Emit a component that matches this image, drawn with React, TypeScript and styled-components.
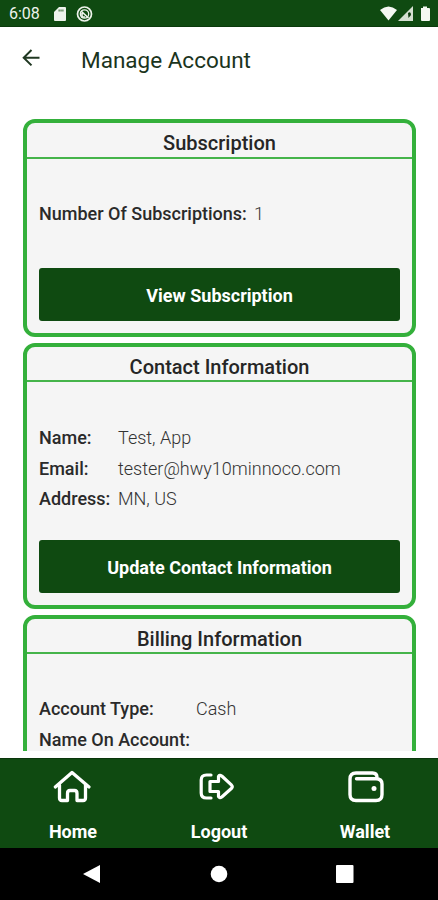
import React from "react";
import styled, { createGlobalStyle } from "styled-components";

const GREEN = "#0f4a11";
const BRIGHT = "#34b03b";

const GlobalStyle = createGlobalStyle`
  * { box-sizing: border-box; }
  body { margin: 0; background: #fff; font-family: Roboto, "Liberation Sans", sans-serif; }
`;

const Screen = styled.div`
  width: 438px;
  height: 900px;
  display: flex;
  flex-direction: column;
  overflow: hidden;
  background: #fff;
`;

const StatusBar = styled.div`
  flex: none;
  height: 27px;
  display: flex;
  align-items: center;
  justify-content: space-between;
  padding: 0 7px 0 9px;
  background: ${GREEN};
  border-bottom: 1px solid #0a3a0c;
  color: #eef3ec;
`;

const StatusGroup = styled.div`
  display: flex;
  align-items: center;
`;

const Clock = styled.span`
  width: 45px;
  font-size: 16px;
  line-height: 26px;
  padding-top: 2px;
  white-space: nowrap;
`;

const Header = styled.header`
  flex: none;
  height: 92px;
  display: flex;
  align-items: flex-start;
  padding: 20px 0 0 20px;
`;

const BackButton = styled.button`
  width: 61px;
  height: 24px;
  padding: 0;
  border: 0;
  background: none;
  text-align: left;
`;

const Title = styled.h1`
  margin: 0;
  font-size: 22.5px;
  font-weight: 400;
  line-height: 26px;
  color: #1b341d;
  white-space: nowrap;
`;

const Content = styled.main`
  flex: none;
  height: 632px;
  overflow: hidden;
  padding: 0 22px 0 23px;
  display: flex;
  flex-direction: column;
  gap: 6px;
`;

const Card = styled.section<{ $height: number }>`
  flex: none;
  height: ${(p) => p.$height}px;
  display: flex;
  flex-direction: column;
  border: 4px solid ${BRIGHT};
  border-radius: 12px;
  background: #f5f5f5;
`;

const CardTitle = styled.h2<{ $height: number }>`
  flex: none;
  height: ${(p) => p.$height}px;
  margin: 0;
  padding-top: 5px;
  border-bottom: 2px solid #45b44a;
  text-align: center;
  font-size: 20px;
  font-weight: 500;
  line-height: 31px;
  color: #262626;
`;

const Fields = styled.dl<{ $labelWidth: number; $top: number }>`
  display: grid;
  grid-template-columns: ${(p) => p.$labelWidth}px 1fr;
  grid-auto-rows: 30.6px;
  margin: ${(p) => p.$top}px 0 0;
  padding-left: 12px;
  font-size: 18px;
  line-height: 30px;
  white-space: nowrap;
`;

const Label = styled.dt`
  font-weight: 500;
  color: #2a2a2a;
`;

const Value = styled.dd`
  margin: 0;
  font-weight: 300;
  color: #333;
`;

const ActionButton = styled.button`
  flex: none;
  height: 53px;
  margin: auto 12px 12px;
  padding: 2px 0 0;
  border: 0;
  border-radius: 3px;
  background: ${GREEN};
  color: #fff;
  font-family: inherit;
  font-size: 18px;
  font-weight: 700;
`;

const TabBar = styled.nav`
  flex: none;
  height: 90px;
  margin-top: 7px;
  display: grid;
  grid-template-columns: repeat(3, 146px);
  background: ${GREEN};
  border-top: 1px solid #0a350b;
`;

const Tab = styled.a`
  display: flex;
  flex-direction: column;
  align-items: center;
  padding-top: 8px;
  color: #fff;
  font-size: 18px;
  font-weight: 700;
  line-height: 24px;
  svg { margin-bottom: 13px; }
`;

const SystemBar = styled.div`
  flex: 1;
  display: flex;
  justify-content: space-between;
  align-items: center;
  padding: 0 84px 0 83px;
  background: #000;
`;

function HomeIcon() {
  return (
    <svg width="42" height="40" viewBox="0 0 42 40" fill="none" stroke="#fff" strokeWidth="3.300" strokeLinejoin="round" strokeLinecap="round">
      <path d="M3.300 20 20 5.500 37 20M7.500 18V31Q7.500 33.500 10 33.500H15.500V26.500Q15.500 23.500 18 23.500H22.500Q25 23.500 25 26.500V33.500H31Q33.500 33.500 33.500 31V18" />
    </svg>
  );
}

function LogoutIcon() {
  return (
    <svg width="42" height="40" viewBox="0 0 42 40" fill="none" stroke="#fff" strokeWidth="3.200" strokeLinejoin="round" strokeLinecap="round">
      <path d="M13 8H8.500Q3.200 8 3.200 13V26Q3.200 31 8.500 31H13" />
      <path d="M12 14.500H20.500V9.500Q21.500 7.500 23.800 9L33.600 18.200Q34.900 19.700 33.600 21.200L23.800 30Q21.500 31.500 20.500 29.500V24.500H12Z" />
    </svg>
  );
}

function WalletIcon() {
  return (
    <svg width="42" height="40" viewBox="0 0 42 40" fill="none" stroke="#fff" strokeWidth="3.400" strokeLinejoin="round" strokeLinecap="round">
      <path d="M33 11V10.500Q33 6 28.500 6H12Q6 6 6 12V27.500Q6 33.500 12 33.500H32Q38 33.500 38 27.500V17Q38 11.700 32 11.700H12.500" />
      <circle cx="30" cy="21.400" r="2.500" fill="#fff" stroke="none" />
    </svg>
  );
}

export default function App() {
  return (
    <>
      <GlobalStyle />
      <Screen>
        <StatusBar>
          <StatusGroup>
            <Clock>6:08</Clock>
            <svg width="42" height="20" viewBox="0 0 42 20">
              <path d="M5 4H11Q12 4 12 5V17Q12 18 11 18H1Q0 18 0 17V9Z" fill="currentColor" />
              <path d="M4.500 7.500h5" stroke="#547d50" strokeWidth="2" strokeDasharray="1.300 .6" />
              <g fill="none" stroke="currentColor" strokeWidth="1.700">
                <circle cx="30.500" cy="11" r="7" />
                <circle cx="30.500" cy="11" r="4.200" strokeWidth="1.300" />
                <path d="m27 8 7.500 7M28 10v4h3" />
              </g>
            </svg>
          </StatusGroup>
          <svg width="52" height="20" viewBox="0 0 52 20" fill="#f4f8f2">
            <path d="M1 7Q9.500 0 18 7L9.500 17.500Z" />
            <path d="M19 18 34 3V18Z" fill="#d5e0d2" />
            <path d="M29 10Q32 8 32 12L29.500 15Z" fill="#0b380c" />
            <path d="M42 5h2V3.500h4V5h2q1 0 1 1V17q0 1-1 1h-7q-1 0-1-1V6q0-1 0-1Z" />
          </svg>
        </StatusBar>
        <Header>
          <BackButton aria-label="Back">
            <svg width="22" height="22" viewBox="0 0 22 22" fill="none" stroke="#203822" strokeWidth="2">
              <path d="M19.500 10.700H3.500M11.500 3 3.700 10.700 11.500 18.400" />
            </svg>
          </BackButton>
          <Title>Manage Account</Title>
        </Header>
        <Content>
          <Card $height={218}>
            <CardTitle $height={36}>Subscription</CardTitle>
            <Fields $labelWidth={215} $top={40}>
              <Label>Number Of Subscriptions:</Label>
              <Value>1</Value>
            </Fields>
            <ActionButton>View Subscription</ActionButton>
          </Card>
          <Card $height={266}>
            <CardTitle $height={35}>Contact Information</CardTitle>
            <Fields $labelWidth={79} $top={41}>
              <Label>Name:</Label>
              <Value>Test, App</Value>
              <Label>Email:</Label>
              <Value>tester@hwy10minnoco.com</Value>
              <Label>Address:</Label>
              <Value>MN, US</Value>
            </Fields>
            <ActionButton>Update Contact Information</ActionButton>
          </Card>
          <Card $height={265}>
            <CardTitle $height={35}>Billing Information</CardTitle>
            <Fields $labelWidth={157} $top={40}>
              <Label>Account Type:</Label>
              <Value>Cash</Value>
              <Label>Name On Account:</Label>
              <Value />
            </Fields>
          </Card>
        </Content>
        <TabBar>
          <Tab><HomeIcon />Home</Tab>
          <Tab><LogoutIcon />Logout</Tab>
          <Tab><WalletIcon />Wallet</Tab>
        </TabBar>
        <SystemBar>
          <svg width="18" height="20" viewBox="0 0 18 20"><path d="M0 10 17 1V19Z" fill="#fff" /></svg>
          <svg width="18" height="18" viewBox="0 0 18 18"><circle cx="9" cy="9" r="8.300" fill="#fff" /></svg>
          <svg width="18" height="18" viewBox="0 0 18 18"><rect width="17.500" height="18" rx="1" fill="#fff" /></svg>
        </SystemBar>
      </Screen>
    </>
  );
}
